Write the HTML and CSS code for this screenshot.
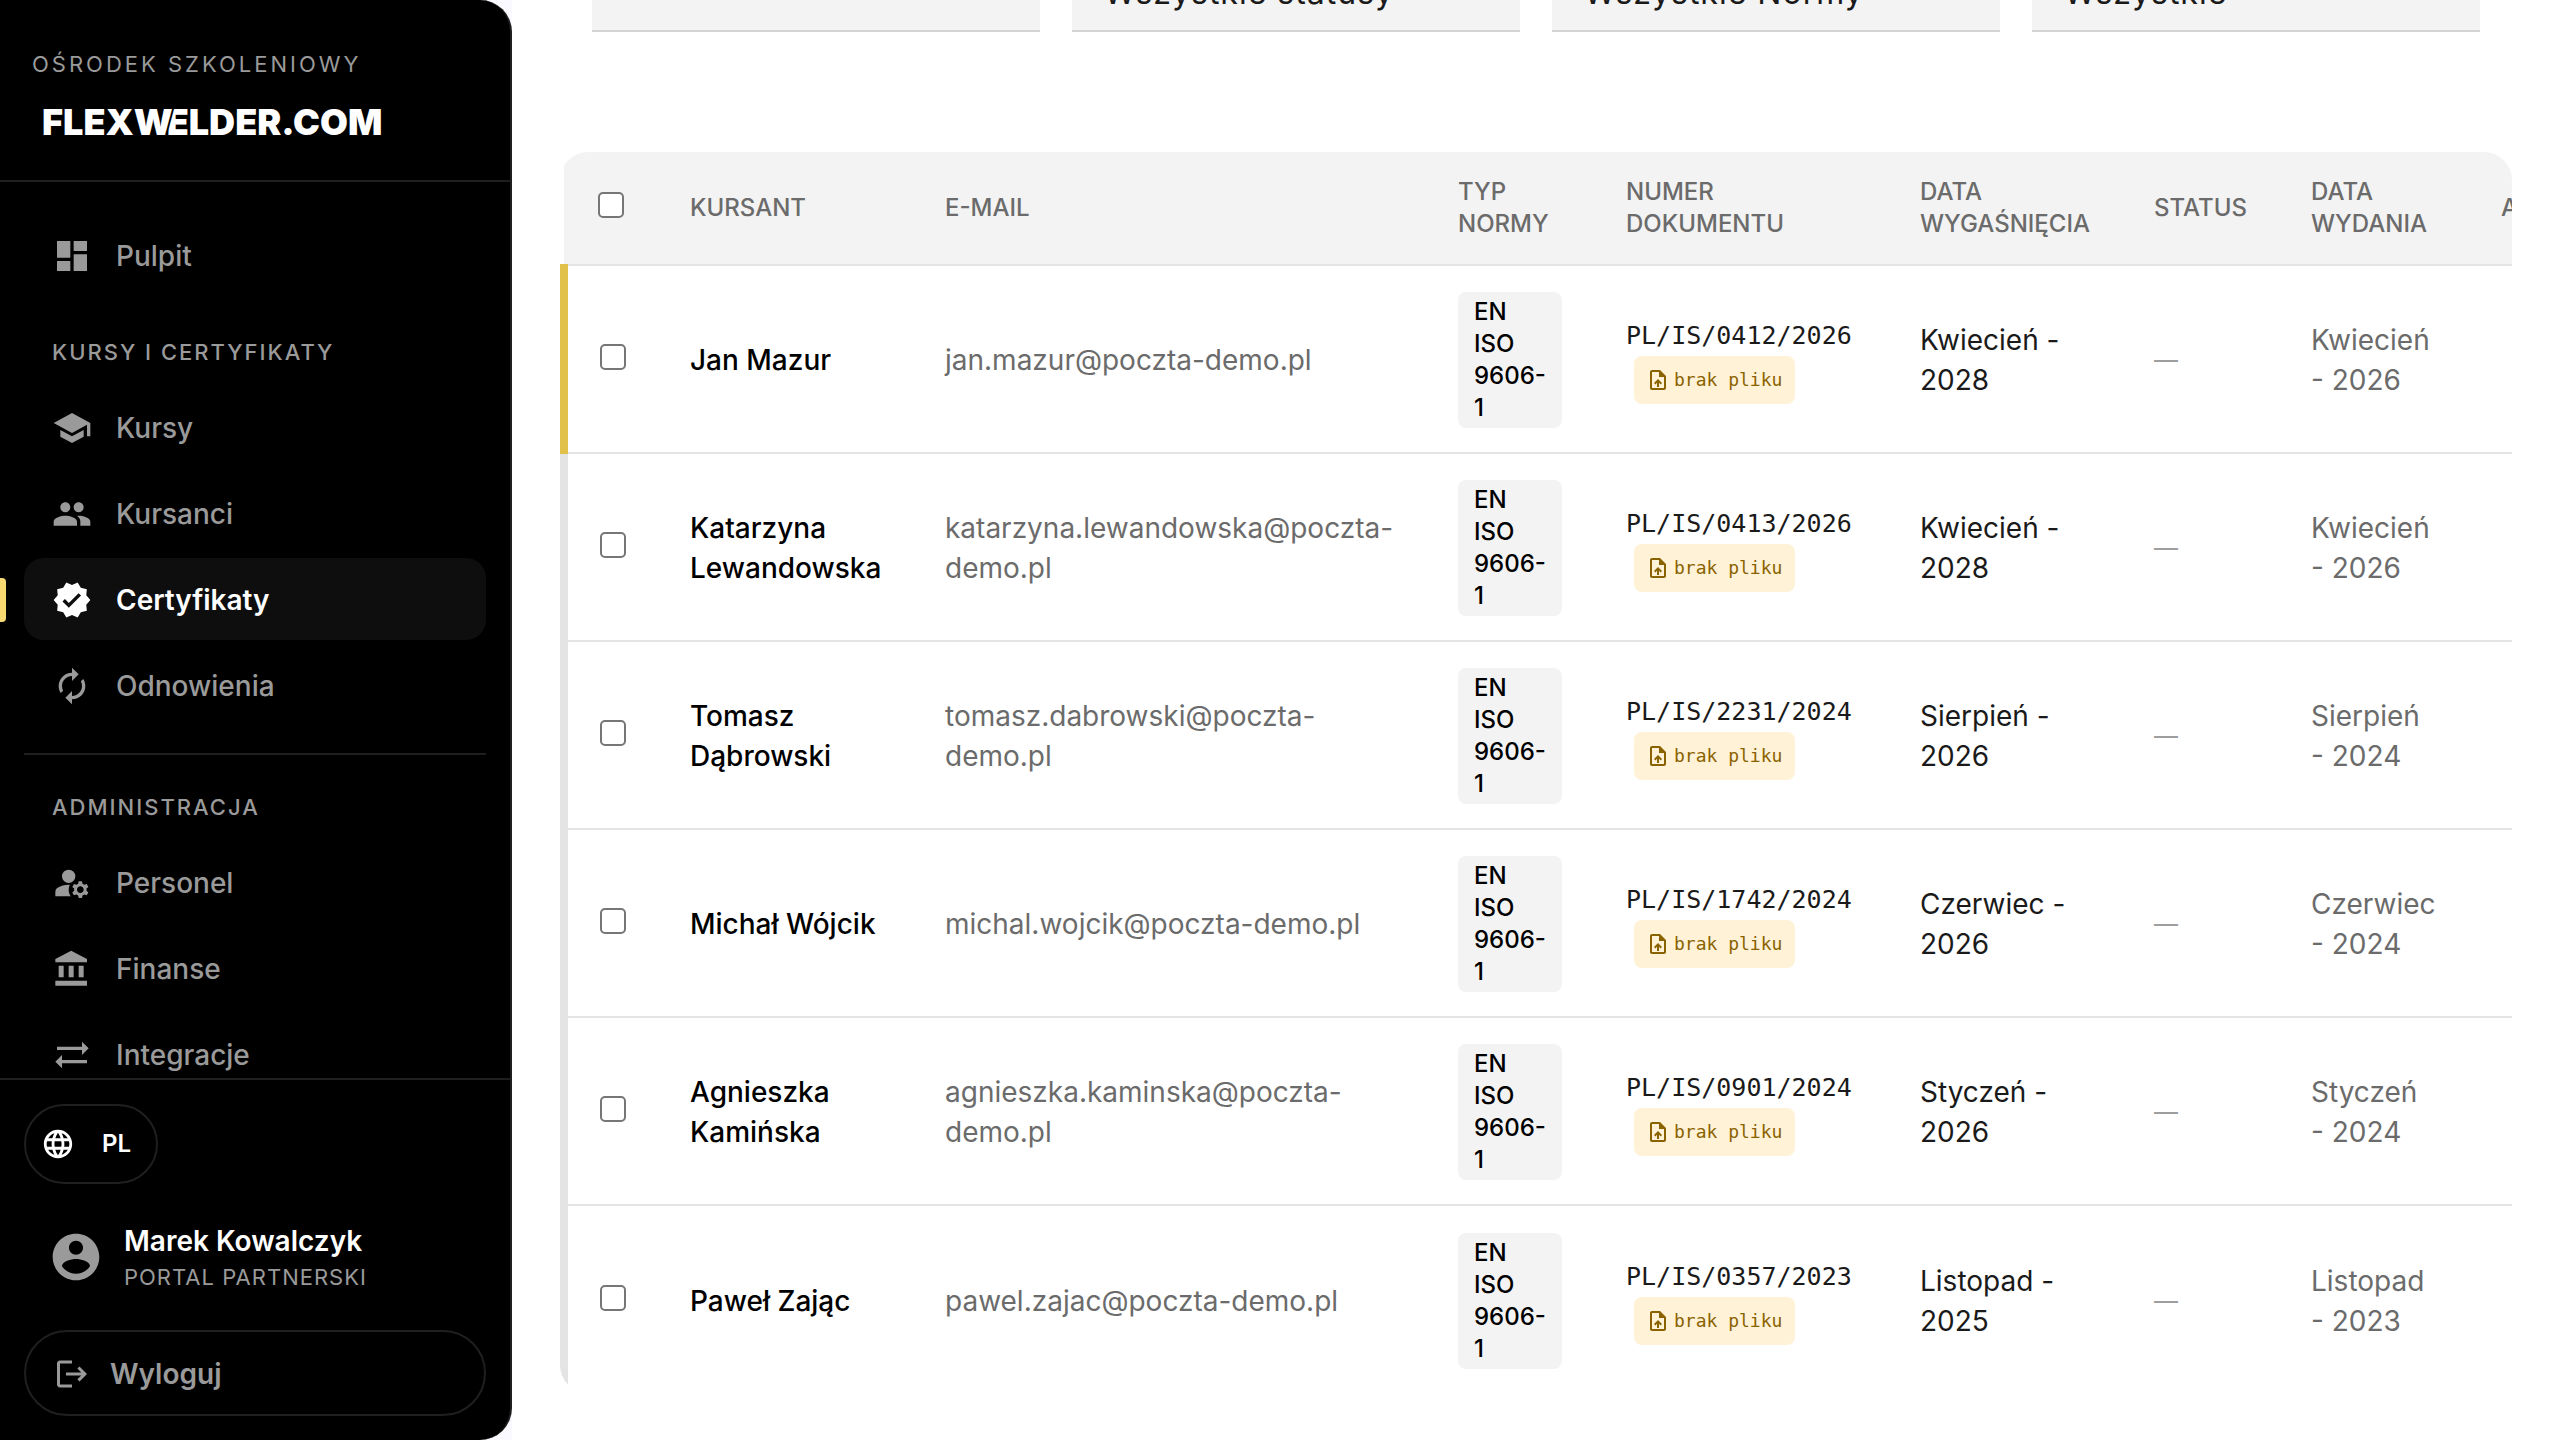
FILE: index.html
```html
<!DOCTYPE html>
<html lang="pl">
<head>
  <meta charset="UTF-8">
  <meta name="viewport" content="width=device-width, initial-scale=1.0">
  <title>Certyfikaty - FLEXWELDER.COM</title>
  <link rel="stylesheet" href="styles.css">
</head>
<body>
  <!-- Shared icon -->
  <svg class="sprite" aria-hidden="true">
    <symbol id="upload-file" viewBox="0 0 24 24">
      <path d="M14 2H6c-1.1 0-1.99.9-1.99 2L4 20c0 1.1.89 2 1.99 2H18c1.1 0 2-.9 2-2V8l-6-6zm4 18H6V4h7v5h5v11zM8 15.01l1.41 1.41L11 14.84V19h2v-4.16l1.59 1.59L16 15.01 12.01 11z"/>
    </symbol>
  </svg>

  <aside class="sidebar">
    <header class="sidebar-header">
      <div class="sidebar-caption">OŚRODEK SZKOLENIOWY</div>
      <div class="logo">FLEX<span class="logo-w">W</span><span class="logo-e">E</span>LDER.COM</div>
    </header>

    <nav class="sidebar-nav">
      <a class="nav-item" href="#pulpit">
        <svg class="nav-icon" viewBox="0 0 24 24"><path d="M3 13h8V3H3v10zm0 8h8v-6H3v6zm10 0h8V11h-8v10zm0-18v6h8V3h-8z"/></svg>
        Pulpit
      </a>

      <div class="nav-group">
        <div class="nav-label">KURSY I CERTYFIKATY</div>
        <a class="nav-item" href="#kursy">
          <svg class="nav-icon" viewBox="0 0 24 24"><path d="M5 13.18v4L12 21l7-3.82v-4L12 17l-7-3.82zM12 3L1 9l11 6 9-4.91V17h2V9L12 3z"/></svg>
          Kursy
        </a>
        <a class="nav-item" href="#kursanci">
          <svg class="nav-icon" viewBox="0 0 24 24"><path d="M16 11c1.66 0 2.99-1.34 2.99-3S17.66 5 16 5c-1.66 0-3 1.34-3 3s1.34 3 3 3zm-8 0c1.66 0 2.99-1.34 2.99-3S9.66 5 8 5C6.34 5 5 6.34 5 8s1.34 3 3 3zm0 2c-2.33 0-7 1.17-7 3.5V19h14v-2.5c0-2.33-4.67-3.5-7-3.5zm8 0c-.29 0-.62.02-.97.05 1.16.84 1.97 1.97 1.97 3.45V19h6v-2.5c0-2.33-4.67-3.5-7-3.5z"/></svg>
          Kursanci
        </a>
        <a class="nav-item active" href="#certyfikaty">
          <svg class="nav-icon" viewBox="0 0 24 24"><path d="M23 12l-2.44-2.79.34-3.69-3.61-.82-1.89-3.2L12 2.96 8.6 1.5 6.71 4.69 3.1 5.5l.34 3.7L1 12l2.44 2.79-.34 3.7 3.61.82L8.6 22.5l3.4-1.47 3.4 1.46 1.89-3.19 3.61-.82-.34-3.69L23 12zm-12.91 4.72l-3.8-3.81 1.48-1.48 2.32 2.33 5.85-5.87 1.48 1.48-7.33 7.35z"/></svg>
          Certyfikaty
        </a>
        <a class="nav-item" href="#odnowienia">
          <svg class="nav-icon" viewBox="0 0 24 24"><path d="M12 6v3l4-4-4-4v3c-4.42 0-8 3.58-8 8 0 1.57.46 3.03 1.24 4.26L6.7 14.8c-.45-.83-.7-1.79-.7-2.8 0-3.31 2.69-6 6-6zm6.76 1.74L17.3 9.2c.44.84.7 1.79.7 2.8 0 3.31-2.69 6-6 6v-3l-4 4 4 4v-3c4.42 0 8-3.58 8-8 0-1.57-.46-3.03-1.24-4.26z"/></svg>
          Odnowienia
        </a>
      </div>

      <div class="nav-group divided">
        <div class="nav-label">ADMINISTRACJA</div>
        <a class="nav-item" href="#personel">
          <svg class="nav-icon" viewBox="0 0 24 24"><circle cx="10" cy="8" r="4"/><path d="M10.67 13.02c-.22-.01-.44-.02-.67-.02-2.42 0-4.68.67-6.61 1.82C2.51 15.34 2 16.32 2 17.35V20h9.26c-.79-1.13-1.26-2.51-1.26-4 0-1.07.25-2.07.67-2.98zM20.75 16c0-.22-.03-.42-.06-.63l1.14-1.01-1-1.73-1.45.49c-.32-.27-.68-.48-1.08-.63L18 11h-2l-.3 1.49c-.4.15-.76.36-1.08.63l-1.45-.49-1 1.73 1.14 1.01c-.03.21-.06.41-.06.63s.03.42.06.63l-1.14 1.01 1 1.73 1.45-.49c.32.27.68.48 1.08.63L16 21h2l.3-1.49c.4-.15.76-.36 1.08-.63l1.45.49 1-1.73-1.14-1.01c.03-.21.06-.41.06-.63zM17 18c-1.1 0-2-.9-2-2s.9-2 2-2 2 .9 2 2-.9 2-2 2z"/></svg>
          Personel
        </a>
        <a class="nav-item" href="#finanse">
          <svg class="nav-icon" viewBox="0 0 24 24"><path d="M4 10v7h3v-7H4zm6 0v7h3v-7h-3zM2 22h19v-3H2v3zm14-12v7h3v-7h-3zM11.5 1L2 6v2h19V6l-9.5-5z"/></svg>
          Finanse
        </a>
        <a class="nav-item" href="#integracje">
          <svg class="nav-icon" viewBox="0 0 24 24"><path d="M22 8l-4-4v3H3v2h15v3l4-4zM2 16l4 4v-3h15v-2H6v-3l-4 4z"/></svg>
          Integracje
        </a>
      </div>
    </nav>

    <footer class="sidebar-footer">
      <button class="lang-btn" type="button">
        <svg class="lang-icon" viewBox="0 0 24 24"><path d="M11.99 2C6.47 2 2 6.48 2 12s4.47 10 9.99 10C17.52 22 22 17.52 22 12S17.52 2 11.99 2zm6.93 6h-2.95c-.32-1.25-.78-2.45-1.38-3.56 1.84.63 3.37 1.91 4.33 3.56zM12 4.04c.83 1.2 1.48 2.53 1.91 3.96h-3.82c.43-1.43 1.08-2.76 1.91-3.96zM4.26 14C4.1 13.36 4 12.69 4 12s.1-1.36.26-2h3.38c-.08.66-.14 1.32-.14 2 0 .68.06 1.34.14 2H4.26zm.82 2h2.95c.32 1.25.78 2.45 1.38 3.56-1.84-.63-3.37-1.9-4.33-3.56zm2.95-8H5.08c.96-1.66 2.49-2.93 4.33-3.56C8.81 5.55 8.35 6.75 8.03 8zM12 19.96c-.83-1.2-1.48-2.53-1.91-3.96h3.82c-.43 1.43-1.08 2.76-1.91 3.96zM14.34 14H9.66c-.09-.66-.16-1.32-.16-2 0-.68.07-1.35.16-2h4.68c.09.65.16 1.32.16 2 0 .68-.07 1.34-.16 2zm.25 5.56c.6-1.11 1.06-2.31 1.38-3.56h2.95c-.96 1.65-2.49 2.93-4.33 3.56zM16.36 14c.08-.66.14-1.32.14-2 0-.68-.06-1.34-.14-2h3.38c.16.64.26 1.31.26 2s-.1 1.36-.26 2h-3.38z"/></svg>
        PL
      </button>
      <div class="user">
        <svg class="user-icon" viewBox="0 0 24 24"><path d="M12 2C6.48 2 2 6.48 2 12s4.48 10 10 10 10-4.48 10-10S17.52 2 12 2zm0 3c1.66 0 3 1.34 3 3s-1.34 3-3 3-3-1.34-3-3 1.34-3 3-3zm0 14.2c-2.5 0-4.71-1.28-6-3.22.03-1.99 4-3.08 6-3.08 1.99 0 5.97 1.09 6 3.08-1.29 1.94-3.5 3.22-6 3.22z"/></svg>
        <div>
          <div class="user-name">Marek Kowalczyk</div>
          <div class="user-role">PORTAL PARTNERSKI</div>
        </div>
      </div>
      <button class="logout-btn" type="button">
        <svg class="logout-icon" viewBox="0 0 24 24"><path d="M17 7l-1.41 1.41L18.17 11H8v2h10.17l-2.58 2.58L17 17l5-5zM4 5h8V3H4c-1.1 0-2 .9-2 2v14c0 1.1.9 2 2 2h8v-2H4V5z"/></svg>
        Wyloguj
      </button>
    </footer>
  </aside>

  <main class="content">
    <form class="filters">
      <input class="field" type="text" aria-label="Szukaj">
      <select class="field" aria-label="Status"><option>Wszystkie statusy</option></select>
      <select class="field" aria-label="Norma"><option>Wszystkie Normy</option></select>
      <select class="field" aria-label="Pliki"><option>Wszystkie</option></select>
    </form>

    <div class="table-wrap">
      <table>
        <colgroup>
          <col class="col-check"><col class="col-name"><col class="col-email"><col class="col-norm"><col class="col-number"><col class="col-expiry"><col class="col-status"><col class="col-issued"><col class="col-actions">
        </colgroup>
        <thead>
          <tr>
            <th class="check"><input type="checkbox" aria-label="Zaznacz wszystkie"></th>
            <th>KURSANT</th>
            <th>E-MAIL</th>
            <th>TYP NORMY</th>
            <th>NUMER DOKUMENTU</th>
            <th>DATA WYGAŚNIĘCIA</th>
            <th>STATUS</th>
            <th>DATA WYDANIA</th>
            <th>AKCJE</th>
          </tr>
        </thead>
        <tbody>
          <tr class="marked">
            <td class="check"><input type="checkbox" aria-label="Jan Mazur"></td>
            <td class="name">Jan Mazur</td>
            <td class="muted">jan.mazur@poczta-demo.pl</td>
            <td><span class="chip">EN ISO 9606-1</span></td>
            <td class="number">PL/IS/0412/2026 <span class="no-file"><svg><use href="#upload-file"/></svg>brak pliku</span></td>
            <td>Kwiecień - 2028</td>
            <td class="dash">—</td>
            <td class="muted">Kwiecień - 2026</td>
            <td></td>
          </tr>
          <tr>
            <td class="check"><input type="checkbox" aria-label="Katarzyna Lewandowska"></td>
            <td class="name">Katarzyna Lewandowska</td>
            <td class="muted">katarzyna.lewandowska@poczta-demo.pl</td>
            <td><span class="chip">EN ISO 9606-1</span></td>
            <td class="number">PL/IS/0413/2026 <span class="no-file"><svg><use href="#upload-file"/></svg>brak pliku</span></td>
            <td>Kwiecień - 2028</td>
            <td class="dash">—</td>
            <td class="muted">Kwiecień - 2026</td>
            <td></td>
          </tr>
          <tr>
            <td class="check"><input type="checkbox" aria-label="Tomasz Dąbrowski"></td>
            <td class="name">Tomasz Dąbrowski</td>
            <td class="muted">tomasz.dabrowski@poczta-demo.pl</td>
            <td><span class="chip">EN ISO 9606-1</span></td>
            <td class="number">PL/IS/2231/2024 <span class="no-file"><svg><use href="#upload-file"/></svg>brak pliku</span></td>
            <td>Sierpień - 2026</td>
            <td class="dash">—</td>
            <td class="muted">Sierpień - 2024</td>
            <td></td>
          </tr>
          <tr>
            <td class="check"><input type="checkbox" aria-label="Michał Wójcik"></td>
            <td class="name">Michał Wójcik</td>
            <td class="muted">michal.wojcik@poczta-demo.pl</td>
            <td><span class="chip">EN ISO 9606-1</span></td>
            <td class="number">PL/IS/1742/2024 <span class="no-file"><svg><use href="#upload-file"/></svg>brak pliku</span></td>
            <td>Czerwiec - 2026</td>
            <td class="dash">—</td>
            <td class="muted">Czerwiec - 2024</td>
            <td></td>
          </tr>
          <tr>
            <td class="check"><input type="checkbox" aria-label="Agnieszka Kamińska"></td>
            <td class="name">Agnieszka Kamińska</td>
            <td class="muted">agnieszka.kaminska@poczta-demo.pl</td>
            <td><span class="chip">EN ISO 9606-1</span></td>
            <td class="number">PL/IS/0901/2024 <span class="no-file"><svg><use href="#upload-file"/></svg>brak pliku</span></td>
            <td>Styczeń - 2026</td>
            <td class="dash">—</td>
            <td class="muted">Styczeń - 2024</td>
            <td></td>
          </tr>
          <tr>
            <td class="check"><input type="checkbox" aria-label="Paweł Zając"></td>
            <td class="name">Paweł Zając</td>
            <td class="muted">pawel.zajac@poczta-demo.pl</td>
            <td><span class="chip">EN ISO 9606-1</span></td>
            <td class="number">PL/IS/0357/2023 <span class="no-file"><svg><use href="#upload-file"/></svg>brak pliku</span></td>
            <td>Listopad - 2025</td>
            <td class="dash">—</td>
            <td class="muted">Listopad - 2023</td>
            <td></td>
          </tr>
        </tbody>
      </table>
    </div>
  </main>
</body>
</html>
```
FILE: styles.css
```css
/* Global Styles */
* {
  box-sizing: border-box;
}
body {
  margin: 0;
  height: 100vh;
  display: flex;
  overflow: hidden;
  font-family: Inter, 'Liberation Sans', sans-serif;
  font-size: 28px;
  line-height: 40px;
  color: #1a1a1a;
  background: #f9f9ff;
}
button, input, select {
  font: inherit;
}
svg {
  fill: currentColor;
  flex-shrink: 0;
}
.sprite {
  display: none;
}

/* Sidebar */
.sidebar {
  width: 512px;
  flex-shrink: 0;
  display: flex;
  flex-direction: column;
  background: #000;
  color: #9a9a9a;
  border-right: 2px solid #1f1f1f;
  border-radius: 0 32px 32px 0;
}
.sidebar-header {
  padding: 48px 32px 38px;
  border-bottom: 2px solid #1f1f1f;
}
.sidebar-caption {
  font-size: 22px;
  line-height: 32px;
  letter-spacing: 3px;
}
.logo {
  display: flex;
  margin-top: 22px;
  padding-left: 10px;
  font-size: 36px;
  font-weight: 900;
  line-height: 40px;
  color: #fff;
}
.logo-w {
  z-index: 1;
  -webkit-text-stroke: 4px #000;
  paint-order: stroke;
}
.logo-e {
  margin-left: -6px;
}

/* Navigation */
.sidebar-nav {
  flex: 1;
  min-height: 0;
  overflow: hidden;
  padding: 32px 24px 0;
}
.nav-item {
  position: relative;
  display: flex;
  align-items: center;
  gap: 24px;
  height: 82px;
  margin-bottom: 4px;
  padding: 1px 28px 0;
  border-radius: 20px;
  color: inherit;
  font-weight: 500;
  text-decoration: none;
}
.nav-item.active {
  background: #0e0e0e;
  color: #fff;
  font-weight: 600;
}
.nav-item.active::before {
  content: '';
  position: absolute;
  left: -24px;
  width: 6px;
  height: 44px;
  border-radius: 0 4px 4px 0;
  background: #f8d870;
}
.nav-icon {
  width: 40px;
  height: 40px;
}
.nav-label {
  padding: 36px 28px 18px;
  font-size: 22px;
  font-weight: 500;
  line-height: 32px;
  letter-spacing: 2px;
}
.nav-group.divided {
  margin-top: 27px;
  border-top: 2px solid #1f1f1f;
}

/* Sidebar footer */
.sidebar-footer {
  padding: 24px;
  border-top: 2px solid #1f1f1f;
}
.lang-btn, .logout-btn {
  display: flex;
  align-items: center;
  background: none;
  border: 2px solid #1f1f1f;
  border-radius: 44px;
  cursor: pointer;
}
.lang-btn {
  gap: 27px;
  height: 80px;
  padding: 0 25px 0 15px;
  color: #fff;
  font-size: 24px;
  font-weight: 600;
}
.lang-icon {
  width: 34px;
  height: 34px;
}
.user {
  display: flex;
  align-items: center;
  gap: 20px;
  padding: 37px 24px;
}
.user-icon {
  width: 56px;
  height: 56px;
}
.user-name {
  color: #fff;
  font-weight: 600;
}
.user-role {
  font-size: 22px;
  line-height: 32px;
  letter-spacing: 1px;
}
.logout-btn {
  gap: 20px;
  width: 100%;
  height: 86px;
  padding: 1px 28px 0;
  color: #9a9a9a;
  font-weight: 600;
}
.logout-icon {
  width: 36px;
  height: 36px;
}

/* Content */
.content {
  flex: 1;
  min-width: 0;
  padding: 0 48px;
  background: #fff;
}

/* Filters, scrolled partly out of view */
.filters {
  display: grid;
  grid-template-columns: repeat(4, 1fr);
  gap: 32px;
  margin: -80px 32px 120px;
}
.field {
  appearance: none;
  min-width: 0;
  height: 112px;
  padding: 50px 32px 14px;
  border: 0;
  border-bottom: 2px solid #d4d4d4;
  border-radius: 0;
  background: #f3f3f3;
  color: #1a1a1a;
  font-size: 32px;
  letter-spacing: 1px;
}

/* Table */
.table-wrap {
  overflow: hidden;
  border-radius: 28px;
}
table {
  table-layout: fixed;
  width: 2144px;
  border-collapse: collapse;
}
.col-check { width: 94px; }
.col-name { width: 255px; }
.col-email { width: 513px; }
.col-norm { width: 168px; }
.col-number { width: 294px; }
.col-expiry { width: 234px; }
.col-status { width: 157px; }
.col-issued { width: 190px; }

th, td {
  padding: 0 32px;
  text-align: left;
}
th {
  height: 113px;
  background: #f3f3f3;
  color: #6b6b6b;
  font-size: 24px;
  font-weight: 500;
  line-height: 32px;
}
td {
  height: 188px;
  padding-top: 2px;
  border-top: 2px solid #e4e4e4;
}
.check {
  padding: 2px 0 0;
  text-align: center;
}
td.check {
  border-left: 8px solid #e4e4e4;
}
.marked td.check {
  border-left-color: #e2c14b;
}
.check input {
  appearance: none;
  width: 26px;
  height: 26px;
  margin: 0;
  border: 2px solid #767676;
  border-radius: 5px;
  background: #fff;
}
.name {
  color: #000;
  font-weight: 500;
}
.muted {
  color: #6b6b6b;
}
.dash {
  color: #9e9e9e;
  font-size: 24px;
}
.chip {
  display: block;
  padding: 4px 16px;
  border-radius: 8px;
  background: #f3f3f3;
  color: #000;
  font-size: 24px;
  font-weight: 500;
  line-height: 32px;
}
.number {
  font-family: Consolas, 'DejaVu Sans Mono', monospace;
  font-size: 25px;
}
.no-file {
  display: flex;
  align-items: center;
  gap: 4px;
  width: fit-content;
  height: 48px;
  margin-left: 8px;
  padding: 0 13px 0 12px;
  border-radius: 8px;
  background: #fff2d6;
  color: #8a6200;
  font-size: 18px;
}
.no-file svg {
  width: 24px;
  height: 24px;
}
```
